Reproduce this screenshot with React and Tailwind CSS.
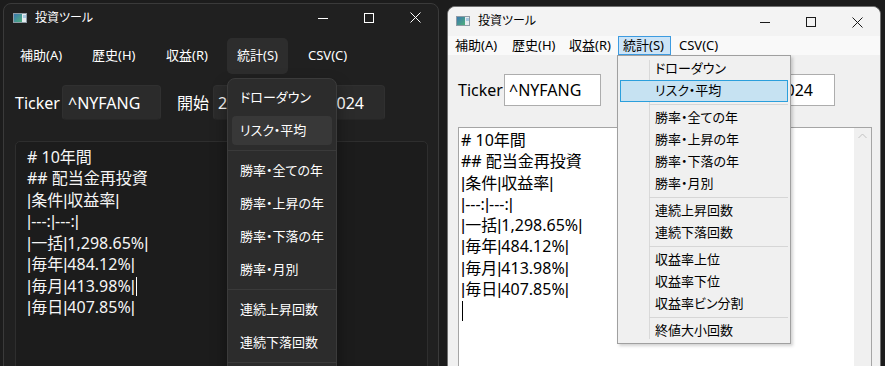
import React from "react";

function AppIcon({ id }) {
  return (
    <svg width="14" height="10" viewBox="0 0 14 10">
      <defs>
        <linearGradient id={id} x1="0" y1="0" x2="1" y2="1">
          <stop offset="0" stopColor="#3a78b0" />
          <stop offset="1" stopColor="#4fb07a" />
        </linearGradient>
      </defs>
      <rect x="0.5" y="0.5" width="13" height="9" fill="#e6ecf0" stroke="#8f9ca6" />
      <rect x="1" y="1" width="8" height="8" fill={`url(#${id})`} />
      <rect x="10" y="2" width="3" height="3" fill="#a8c9e2" />
    </svg>
  );
}

function Controls({ color }) {
  return (
    <div className="flex h-full">
      <div className="w-[46px] flex items-center justify-center">
        <svg width="10" height="10" viewBox="0 0 10 10">
          <line x1="0" y1="5.5" x2="10" y2="5.5" stroke={color} strokeWidth="1" />
        </svg>
      </div>
      <div className="w-[46px] flex items-center justify-center">
        <svg width="10" height="10" viewBox="0 0 10 10">
          <rect x="0.5" y="0.5" width="9" height="9" fill="none" stroke={color} strokeWidth="1" />
        </svg>
      </div>
      <div className="w-[46px] flex items-center justify-center">
        <svg width="11" height="11" viewBox="0 0 11 11">
          <path d="M0.5 0.5 L10.5 10.5 M10.5 0.5 L0.5 10.5" stroke={color} strokeWidth="1" />
        </svg>
      </div>
    </div>
  );
}

const LINES = [
  "# 10年間",
  "## 配当金再投資",
  "|条件|収益率|",
  "|---:|---:|",
  "|一括|1,298.65%|",
  "|毎年|484.12%|",
  "|毎月|413.98%|",
  "|毎日|407.85%|",
];

function Line({ text }) {
  const parts = text.split("|");
  const out = [];
  parts.forEach((p, i) => {
    if (i > 0) {
      out.push(
        <span key={"b" + i} className="font-['Liberation_Sans',sans-serif]">
          |
        </span>
      );
    }
    if (p) out.push(<span key={"t" + i}>{p}</span>);
  });
  return <>{out}</>;
}

const DARK_MENU = [
  ["ドローダウン", false],
  ["リスク・平均", true],
  "sep",
  ["勝率・全ての年", false],
  ["勝率・上昇の年", false],
  ["勝率・下落の年", false],
  ["勝率・月別", false],
  "sep",
  ["連続上昇回数", false],
  ["連続下落回数", false],
  "sep",
];

const LIGHT_MENU = [
  ["ドローダウン", false],
  ["リスク・平均", true],
  "sep",
  ["勝率・全ての年", false],
  ["勝率・上昇の年", false],
  ["勝率・下落の年", false],
  ["勝率・月別", false],
  "sep",
  ["連続上昇回数", false],
  ["連続下落回数", false],
  "sep",
  ["収益率上位", false],
  ["収益率下位", false],
  ["収益率ビン分割", false],
  "sep",
  ["終値大小回数", false],
];

function DarkWindow() {
  return (
    <div className="relative w-[436px] h-[420px] mt-[3px] ml-[3px] shrink-0 rounded-t-[8px] border border-[#3a3a3a] bg-[#202020] text-white">
      <div className="flex h-[27px] items-center">
        <div className="flex flex-1 items-center gap-[8px] pl-[9px]">
          <AppIcon id="gd" />
          <span className="text-[12px] leading-none">投資ツール</span>
        </div>
        <Controls color="#ffffff" />
      </div>
      <div className="mt-[7px] flex h-[36px] pl-[6px] text-[13px]">
        <div className="w-[62px] flex items-center pl-[10px]">補助(A)</div>
        <div className="ml-[10px] w-[63px] flex items-center pl-[10px]">歴史(H)</div>
        <div className="ml-[11px] w-[61px] flex items-center pl-[10px]">収益(R)</div>
        <div className="ml-[10px] w-[61px] flex items-center pl-[10px] rounded-[5px] bg-[#2d2d2d]">統計(S)</div>
        <div className="ml-[10px] w-[58px] flex items-center pl-[10px]">CSV(C)</div>
      </div>
      <div className="mt-[11px] flex h-[35px] items-center pl-[11px] text-[16px]">
        <span className="w-[47px]">Ticker</span>
        <div className="flex h-full w-[99px] items-center rounded-[4px] border border-[#303030] border-b-[#262626] bg-[#2b2b2b] pl-[5px]">
          ^NYFANG
        </div>
        <span className="ml-[16px] w-[36px]">開始</span>
        <div className="flex h-full w-[172px] items-center justify-between rounded-[4px] border border-[#303030] border-b-[#262626] bg-[#2b2b2b] pl-[4px] pr-[20px]">
          <span>2014/01/01</span>
          <span>2024</span>
        </div>
      </div>
      <div className="mt-[21px] ml-[11px] h-[300px] w-[413px] rounded-[5px] border border-[#2e2e2e] bg-[#1c1c1c] pl-[11px] pt-[5px] text-[16px] leading-[21.45px] text-[#f5f5f5]">
        {LINES.map((l, i) => (
          <div key={i} className="whitespace-pre">
            <Line text={l} />
            {i === 6 && <span className="ml-[1px] inline-block h-[19px] w-[1px] bg-white align-[-4px]" />}
          </div>
        ))}
      </div>
      <div className="absolute left-[223px] top-[74px] h-[330px] w-[110px] rounded-[8px] border border-[#3b3b3b] bg-[#2c2c2c] pt-[2px] text-[13px] shadow-[0_8px_16px_rgba(0,0,0,0.4)]">
        {DARK_MENU.map((it, i) =>
          it === "sep" ? (
            <div key={i} className="flex h-[7px] items-center">
              <div className="h-[1px] w-full bg-[#3a3a3a]" />
            </div>
          ) : (
            <div key={i} className="h-[33px] px-[4px] py-[2px]">
              <div className={`flex h-full items-center rounded-[4px] pl-[8px] ${it[1] ? "bg-[#383838]" : ""}`}>{it[0]}</div>
            </div>
          )
        )}
      </div>
    </div>
  );
}

function LightWindow() {
  return (
    <div className="relative w-[434px] h-[420px] mt-[6px] ml-[8px] shrink-0 rounded-t-[8px] border border-[#707070] bg-[#f0f0f0] text-black">
      <div className="flex h-[29px] items-center bg-[#f3f3f3] rounded-t-[8px]">
        <div className="flex flex-1 items-center gap-[8px] pl-[8px] pb-[2px]">
          <AppIcon id="gl" />
          <span className="text-[12px] leading-none">投資ツール</span>
        </div>
        <div className="h-full pt-[1px]">
          <Controls color="#1a1a1a" />
        </div>
      </div>
      <div className="flex h-[19px] bg-[#f9f9f9] pl-[2px] text-[13px] leading-none">
        <div className="w-[57px] flex items-center pl-[5px]">補助(A)</div>
        <div className="w-[57px] flex items-center pl-[5px]">歴史(H)</div>
        <div className="w-[54px] flex items-center pl-[5px]">収益(R)</div>
        <div className="w-[53px] flex items-center pl-[4px] border border-[#3d9be0] bg-[#cce4f7]">統計(S)</div>
        <div className="ml-[3px] w-[50px] flex items-center pl-[5px]">CSV(C)</div>
      </div>
      <div className="mt-[19px] flex h-[32px] items-center pl-[10px] text-[16px]">
        <span className="w-[46px]">Ticker</span>
        <div className="flex h-full w-[97px] items-center border border-[#adadad] bg-white pl-[4px]">^NYFANG</div>
        <span className="ml-[16px] w-[36px]">開始</span>
        <div className="flex h-full w-[182px] items-center justify-between border border-[#adadad] bg-white pl-[4px] pr-[21px]">
          <span>2014/01/01</span>
          <span>2024</span>
        </div>
      </div>
      <div className="mt-[21px] ml-[10px] flex h-[300px] w-[414px] border border-[#a5a5a5] bg-white">
        <div className="flex-1 pl-[2px] pt-[2px] text-[16px] leading-[21.3px]">
          {LINES.map((l, i) => (
            <div key={i} className="whitespace-pre">
              <Line text={l} />
            </div>
          ))}
          <div className="mt-[1px] ml-[1px] h-[20px] w-[1px] bg-black" />
        </div>
        <div className="flex w-[17px] justify-center bg-[#f0f0f0] pt-[5px]">
          <svg width="9" height="6" viewBox="0 0 9 6">
            <path d="M0.5 5 L4.5 1 L8.5 5" fill="none" stroke="#c2c2c2" strokeWidth="1" />
          </svg>
        </div>
      </div>
      <div className="absolute left-[169px] top-[48px] w-[174px] border border-[#a0a0a0] bg-[#f0f0f0] pt-[2px] pb-[1px] text-[13px] shadow-[2px_2px_3px_rgba(0,0,0,0.18)]">
        <div className="absolute left-[31px] top-[4px] bottom-[4px] w-[1px] bg-[#d9d9d9]" />
        {LIGHT_MENU.map((it, i) =>
          it === "sep" ? (
            <div key={i} className="relative flex h-[5px] items-center pl-[31px] pr-[2px]">
              <div className="h-[1px] w-full bg-[#d6d6d6]" />
            </div>
          ) : (
            <div
              key={i}
              className={`relative mx-[2px] flex h-[22px] items-center border pl-[34px] ${it[1] ? "border-[#2b9fdc] bg-[#c6e2f2]" : "border-transparent"}`}
            >
              {it[0]}
            </div>
          )
        )}
      </div>
    </div>
  );
}

export default function App() {
  return (
    <div className="flex h-[366px] w-[885px] overflow-hidden bg-[#1c1c1c] font-['Noto_Sans','Noto_Sans_CJK_JP',sans-serif] [font-feature-settings:'palt']">
      <DarkWindow />
      <LightWindow />
    </div>
  );
}
